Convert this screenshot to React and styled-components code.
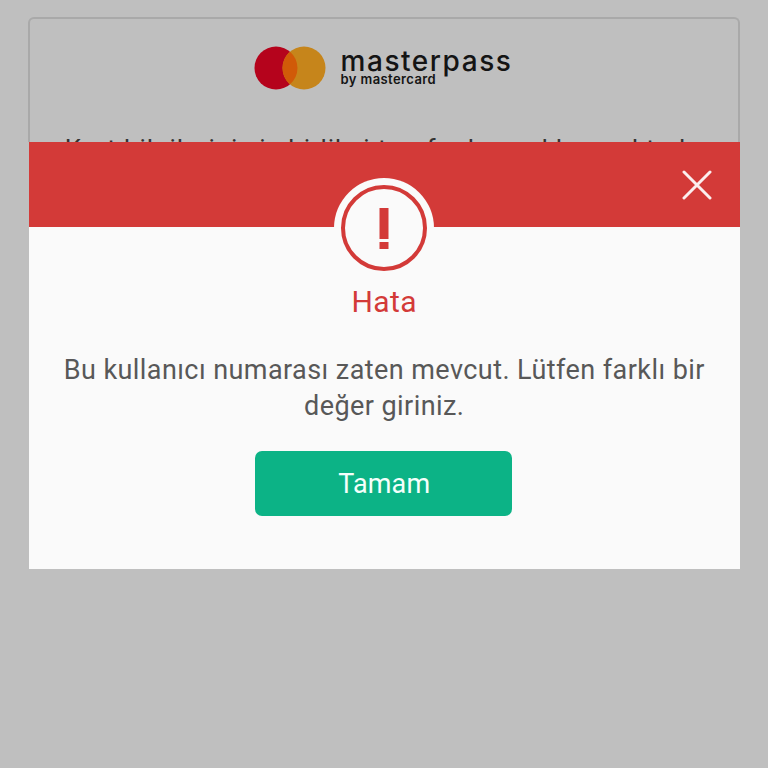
import React from "react";
import styled, { createGlobalStyle } from "styled-components";

const Global = createGlobalStyle`
  html, body { margin: 0; padding: 0; background: #bfbfbf; }
  * { box-sizing: border-box; }
  body { font-family: Roboto, "Noto Sans", sans-serif; }
`;

const Page = styled.div`
  position: relative;
  width: 768px;
  height: 768px;
  overflow: hidden;
  background: #bfbfbf;
  padding: 17px 28px 0;
`;

const BackCard = styled.div`
  height: 125px;
  overflow: hidden;
  border: 2px solid #a9a9a9;
  border-bottom: none;
  border-radius: 6px 6px 0 0;
  display: flex;
  flex-direction: column;
  align-items: center;
`;

const Brand = styled.div`
  display: flex;
  align-items: center;
  gap: 14px;
  margin-top: 27px;
  margin-left: -2px;
  flex: none;
`;

const Wordmark = styled.div`
  display: flex;
  flex-direction: column;
  color: #141414;
  font-family: Inter, sans-serif;
  margin-bottom: 1px;
`;

const WordMain = styled.span`
  font-size: 28px;
  line-height: 22px;
  font-weight: 500;
  letter-spacing: 1.55px;
`;

const WordSub = styled.span`
  font-size: 13px;
  line-height: 13px;
  font-weight: 600;
  letter-spacing: 0.4px;
  margin-top: 1px;
`;

const BackText = styled.p`
  margin: 43px 0 0;
  width: 660px;
  flex: none;
  text-align: center;
  font-size: 26px;
  line-height: 32px;
  letter-spacing: 0.9px;
  white-space: nowrap;
  color: #333;
`;

const Modal = styled.div`
  position: absolute;
  left: 29px;
  top: 142px;
  width: 710.5px;
  height: 427px;
  background: #fafafa;
  display: flex;
  flex-direction: column;
  align-items: center;
`;

const Banner = styled.div`
  align-self: stretch;
  height: 85px;
  background: #d33a38;
  flex: none;
`;

const Close = styled.button`
  position: absolute;
  right: 27.5px;
  top: 28px;
  width: 30px;
  height: 30px;
  padding: 0;
  border: 0;
  background: transparent;
  display: block;
`;

const Badge = styled.div`
  position: absolute;
  left: 305px;
  top: 36px;
  width: 100px;
  height: 100px;
  border-radius: 50%;
  background: #fafafa;
  display: flex;
  align-items: center;
  justify-content: center;
`;

const Ring = styled.div`
  width: 86px;
  height: 86px;
  border-radius: 50%;
  border: 4.5px solid #d33a38;
  display: flex;
  align-items: center;
  justify-content: center;
`;

const Title = styled.h2`
  margin: 58px 0 0;
  font-size: 30px;
  line-height: 34px;
  font-weight: 400;
  color: #d33a38;
  letter-spacing: 0.4px;
`;

const Message = styled.p`
  margin: 33px 0 0;
  width: 670px;
  text-align: center;
  font-size: 27px;
  line-height: 36px;
  font-weight: 400;
  color: #585858;
  letter-spacing: 0.43px;
`;

const Action = styled.button`
  margin: 27px 1.5px 0 0;
  width: 257px;
  height: 65px;
  border: 0;
  border-radius: 7px;
  padding: 1px 0 0 1.5px;
  background: #0cb386;
  color: #f4fffb;
  font-family: inherit;
  font-size: 27px;
  letter-spacing: 0.1px;
`;

export default function App() {
  return (
    <Page>
      <Global />
      <BackCard>
        <Brand>
          <svg width="73" height="44" viewBox="0 0 73 44">
            <circle cx="22" cy="22" r="21.5" fill="#b5031c" />
            <circle cx="50" cy="22" r="21.5" fill="#c6851b" />
            <path d="M36 5.7a21.5 21.5 0 0 1 0 32.6a21.5 21.5 0 0 1 0-32.6z" fill="#d15a08" />
          </svg>
          <Wordmark>
            <WordMain>masterpass</WordMain>
            <WordSub>by mastercard</WordSub>
          </Wordmark>
        </Brand>
        <BackText>Kart bilgileriniz iş birlikçi tarafından saklanmaktadır</BackText>
      </BackCard>
      <Modal>
        <Banner />
        <Close aria-label="Kapat">
          <svg width="30" height="30" viewBox="0 0 30 30">
            <path d="M2 2L28 28M28 2L2 28" stroke="#fbeeee" strokeWidth="3" strokeLinecap="round" />
          </svg>
        </Close>
        <Badge>
          <Ring>
            <svg width="10" height="41" viewBox="0 0 10 41">
              <rect x="0.5" y="0" width="9" height="31" fill="#d33a38" />
              <rect x="0.5" y="34" width="9" height="7" fill="#d33a38" />
            </svg>
          </Ring>
        </Badge>
        <Title>Hata</Title>
        <Message>Bu kullanıcı numarası zaten mevcut. Lütfen farklı bir değer giriniz.</Message>
        <Action>Tamam</Action>
      </Modal>
    </Page>
  );
}
